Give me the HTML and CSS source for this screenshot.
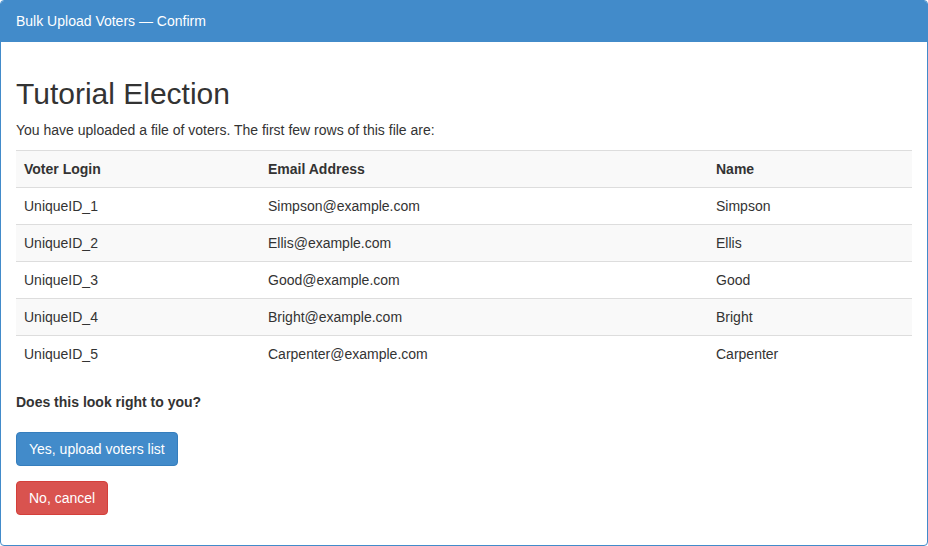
FILE: index.html
```html
<!DOCTYPE html>
<html>
<head>
<meta charset="utf-8">
<link rel="stylesheet" href="styles.css">
</head>
<body>
<div class="panel">
  <div class="panel-heading">Bulk Upload Voters — Confirm</div>
  <div class="panel-body">
    <h1 class="title">Tutorial Election</h1>
    <p class="intro">You have uploaded a file of voters. The first few rows of this file are:</p>
    <table class="voters">
      <tbody>
        <tr><th class="c1">Voter Login</th><th class="c2">Email Address</th><th class="c3">Name</th></tr>
        <tr><td>UniqueID_1</td><td>Simpson@example.com</td><td>Simpson</td></tr>
        <tr><td>UniqueID_2</td><td>Ellis@example.com</td><td>Ellis</td></tr>
        <tr><td>UniqueID_3</td><td>Good@example.com</td><td>Good</td></tr>
        <tr><td>UniqueID_4</td><td>Bright@example.com</td><td>Bright</td></tr>
        <tr><td>UniqueID_5</td><td>Carpenter@example.com</td><td>Carpenter</td></tr>
      </tbody>
    </table>
    <p class="question">Does this look right to you?</p>
    <div class="action"><button class="btn btn-primary">Yes, upload voters list</button></div>
    <div class="action"><button class="btn btn-danger">No, cancel</button></div>
  </div>
</div>
</body>
</html>
```
FILE: styles.css
```css
* { box-sizing: border-box; }
html, body {
  margin: 0;
  padding: 0;
  background: #fff;
}
body {
  font-family: "Liberation Sans", Arial, Helvetica, sans-serif;
  font-size: 14px;
  line-height: 20px;
  color: #333;
}
.panel {
  width: 928px;
  border: 1px solid #428bca;
  border-radius: 4px;
  background: #fff;
}
.panel-heading {
  background: #428bca;
  color: #fff;
  padding: 10px 15px;
  border-bottom: 1px solid #428bca;
  border-top-left-radius: 3px;
  border-top-right-radius: 3px;
  line-height: 20px;
}
.panel-body {
  padding: 15px;
}
.title {
  margin: 20px 0 10px;
  font-size: 30px;
  font-weight: 500;
  line-height: 33px;
}
.intro {
  margin: 0 0 10px;
}
.voters {
  width: 100%;
  border-collapse: collapse;
  border-spacing: 0;
  margin-bottom: 20px;
}
.voters th, .voters td {
  padding: 8px;
  line-height: 20px;
  text-align: left;
  vertical-align: top;
  border-top: 1px solid #ddd;
}
.voters th { font-weight: bold; }
.voters tr:nth-child(odd) { background: #f9f9f9; }
.c1 { width: 244px; }
.c2 { width: 448px; }
.question {
  margin: 0 0 20px;
  font-weight: bold;
}
.action {
  margin-bottom: 15px;
}
.btn {
  display: inline-block;
  font-family: inherit;
  font-size: 14px;
  line-height: 20px;
  padding: 6px 12px;
  border: 1px solid transparent;
  border-radius: 4px;
  color: #fff;
  cursor: pointer;
}
.btn-primary { background: #428bca; border-color: #357ebd; }
.btn-danger { background: #d9534f; border-color: #d43f3a; }
```
